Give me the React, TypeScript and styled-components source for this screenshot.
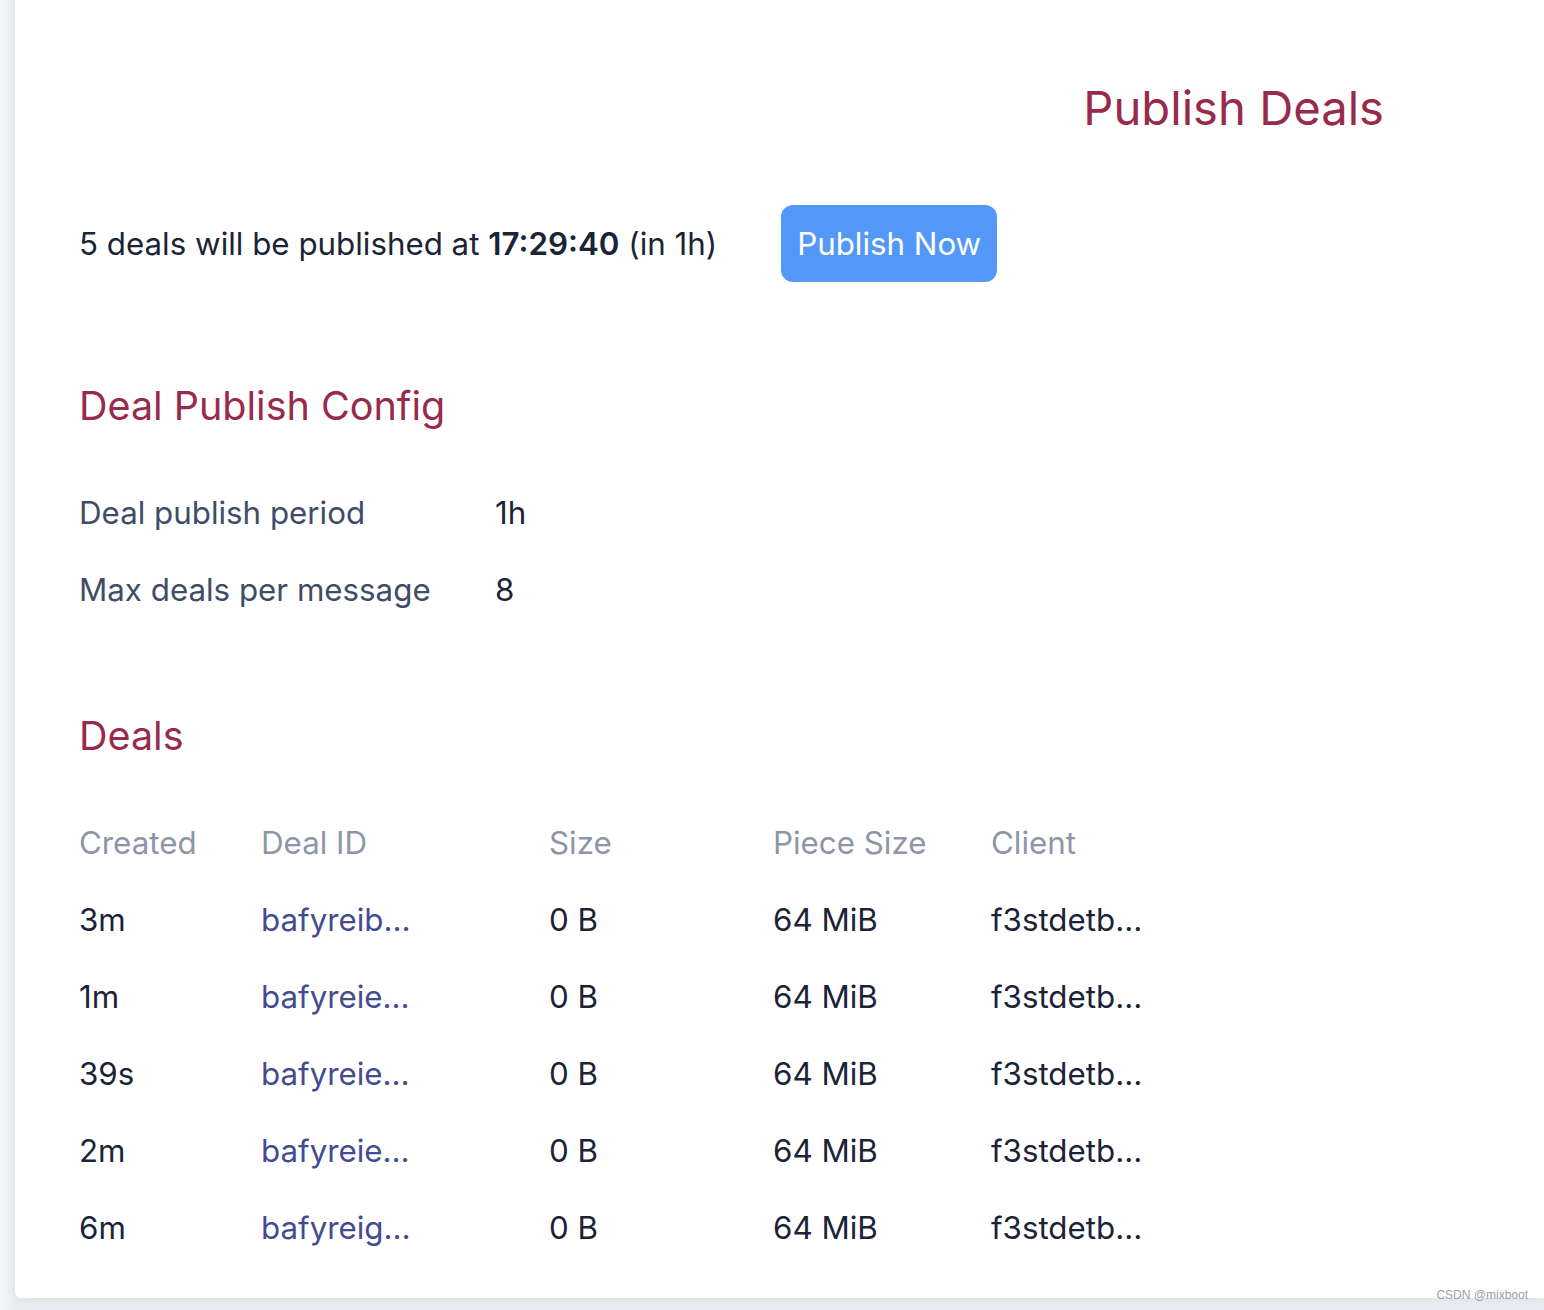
import React from "react";
import styled, { createGlobalStyle } from "styled-components";

const GlobalStyle = createGlobalStyle`
  html, body {
    margin: 0;
    padding: 0;
    background: #eceef2;
    font-family: Inter, "Liberation Sans", Arial, sans-serif;
  }
  * { box-sizing: border-box; }
`;

const BODY_SIZE = "31.3px";

const Page = styled.div`
  position: relative;
  width: 1544px;
  height: 1310px;
  overflow: hidden;
  background: linear-gradient(90deg, #f5f6f8 0px, #e9ecf0 15px);
`;

const Card = styled.main`
  margin-left: 15px;
  height: 1298px;
  background: #ffffff;
  border-bottom-left-radius: 6px;
  box-shadow: 0 1px 10px rgba(30, 40, 60, 0.06);
  padding: 80px 0 0 64px;
  display: flex;
  flex-direction: column;
`;

const TitleRow = styled.div`
  display: flex;
  justify-content: flex-end;
  padding-right: 160px;
`;

const Title = styled.h1`
  margin: 0;
  font-size: 47.2px;
  line-height: 56px;
  font-weight: 400;
  color: #982a4c;
`;

const StatusRow = styled.div`
  display: flex;
  align-items: center;
  gap: 64px;
  margin-top: 69px;
  height: 77px;
`;

const StatusText = styled.p`
  margin: 0;
  font-size: ${BODY_SIZE};
  line-height: 40px;
  color: #1b2337;
  b { font-weight: 600; }
`;

const PrimaryButton = styled.button`
  height: 77px;
  padding: 0 16px;
  border: none;
  border-radius: 12px;
  background: #5498f7;
  color: #ffffff;
  font-family: inherit;
  font-size: ${BODY_SIZE};
  cursor: pointer;
`;

const SectionTitle = styled.h2<{ $gap: number }>`
  margin: ${(p) => p.$gap}px 0 46px;
  font-size: 39.5px;
  line-height: 44px;
  font-weight: 400;
  color: #982a4c;
`;

const ConfigGrid = styled.div`
  display: grid;
  grid-template-columns: 416px auto;
  grid-auto-rows: 77px;
  align-items: center;
  width: max-content;
`;

const ConfigLabel = styled.div`
  font-size: ${BODY_SIZE};
  color: #3f4c68;
`;

const ConfigValue = styled.div`
  font-size: ${BODY_SIZE};
  color: #1b2337;
`;

const Table = styled.table`
  border-collapse: collapse;
  font-size: ${BODY_SIZE};
  td, th { padding: 0; height: 77px; text-align: left; font-weight: 400; white-space: nowrap; }
`;

const HeadCell = styled.th<{ $w?: number }>`
  color: #8d96a8;
  width: ${(p) => (p.$w ? `${p.$w}px` : "auto")};
`;

const Cell = styled.td`
  color: #1b2337;
`;

const LinkCell = styled.td`
  color: #434b91;
`;

const Watermark = styled.div`
  position: absolute;
  right: 16px;
  bottom: 8px;
  font-family: "Liberation Sans", Arial, sans-serif;
  font-size: 12px;
  color: #9aa0a8;
`;

const deals = [
  { created: "3m", id: "bafyreib…" },
  { created: "1m", id: "bafyreie…" },
  { created: "39s", id: "bafyreie…" },
  { created: "2m", id: "bafyreie…" },
  { created: "6m", id: "bafyreig…" },
];

export default function App() {
  return (
    <Page>
      <GlobalStyle />
      <Card>
        <TitleRow>
          <Title>Publish Deals</Title>
        </TitleRow>
        <StatusRow>
          <StatusText>
            5 deals will be published at <b>17:29:40</b> (in 1h)
          </StatusText>
          <PrimaryButton>Publish Now</PrimaryButton>
        </StatusRow>

        <SectionTitle $gap={102}>Deal Publish Config</SectionTitle>
        <ConfigGrid>
          <ConfigLabel>Deal publish period</ConfigLabel>
          <ConfigValue>1h</ConfigValue>
          <ConfigLabel>Max deals per message</ConfigLabel>
          <ConfigValue>8</ConfigValue>
        </ConfigGrid>

        <SectionTitle $gap={86}>Deals</SectionTitle>
        <Table>
          <thead>
            <tr>
              <HeadCell $w={182}>Created</HeadCell>
              <HeadCell $w={288}>Deal ID</HeadCell>
              <HeadCell $w={224}>Size</HeadCell>
              <HeadCell $w={218}>Piece Size</HeadCell>
              <HeadCell>Client</HeadCell>
            </tr>
          </thead>
          <tbody>
            {deals.map((d, i) => (
              <tr key={i}>
                <Cell>{d.created}</Cell>
                <LinkCell>{d.id}</LinkCell>
                <Cell>0 B</Cell>
                <Cell>64 MiB</Cell>
                <Cell>f3stdetb…</Cell>
              </tr>
            ))}
          </tbody>
        </Table>
      </Card>
      <Watermark>CSDN @mixboot</Watermark>
    </Page>
  );
}
